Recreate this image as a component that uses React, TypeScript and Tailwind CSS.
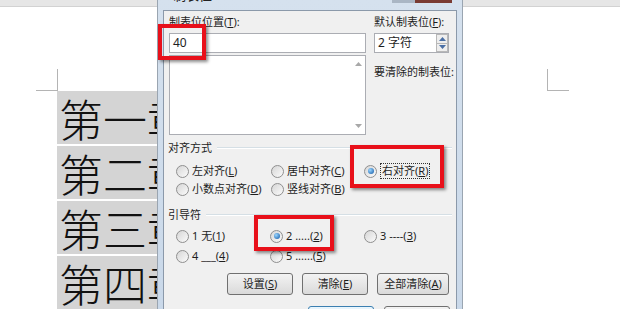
import React from "react";

const Radio = ({ checked }: { checked?: boolean }) => (
  <span className="flex h-[13px] w-[13px] shrink-0 items-center justify-center rounded-full border border-[#8f8f8f] bg-linear-to-br from-[#d6d6d6] to-[#fbfbfb]">
    {checked && (
      <span className="h-[6px] w-[6px] rounded-full bg-[radial-gradient(circle_at_35%_35%,#9ad6ff,#0e55a3)]" />
    )}
  </span>
);

const Option = ({
  checked,
  focus,
  children,
}: {
  checked?: boolean;
  focus?: boolean;
  children: React.ReactNode;
}) => (
  <div className="flex h-[14px] items-center gap-[3px]">
    <Radio checked={checked} />
    <span
      className={
        focus
          ? "border border-dotted border-[#333] px-[1px] leading-[14px]"
          : "leading-[14px]"
      }
    >
      {children}
    </span>
  </div>
);

const GroupTitle = ({ label }: { label: string }) => (
  <div className="flex h-[14px] items-center gap-[5px] pr-[4px]">
    <span className="leading-[14px]">{label}</span>
    <div className="h-[2px] flex-1 border-t border-b border-t-[#d5dfe5] border-b-white" />
  </div>
);

const Btn = ({ w, children }: { w: string; children: React.ReactNode }) => (
  <button
    className={`${w} flex h-[22px] items-center justify-center rounded-[3px] border border-[#707070] bg-linear-to-b from-[#f3f3f3] to-[#dadada] text-[11px] text-[#1e1e1e]`}
  >
    {children}
  </button>
);

const Arrow = ({ up, color }: { up?: boolean; color: string }) => (
  <svg width="7" height="4" viewBox="0 0 7 4">
    <path d={up ? "M0 4 L3.5 0 L7 4 Z" : "M0 0 L3.5 4 L7 0 Z"} fill={color} />
  </svg>
);

const rows = ["第一章", "第二章", "第三章", "第四章"];

export default function App() {
  return (
    <div className="relative h-[309px] w-[620px] overflow-hidden bg-white">
      {/* Word page behind the dialog */}
      <div className="h-[7px] border-b border-[#d2d2d2] bg-[#e6e6e6]" />
      <div className="mt-[62px] flex justify-between pl-[36px] pr-[51px]">
        <div className="h-[22px] w-[22px] border-r border-b border-[#b4b4b4]" />
        <div className="h-[22px] w-[22px] border-l border-b border-[#b4b4b4]" />
      </div>
      <div className="ml-[57px] flex w-[100px] flex-col gap-[2px]">
        {rows.map((r) => (
          <div
            key={r}
            className="flex h-[53px] items-center overflow-hidden whitespace-nowrap bg-[#d4d4d4] pl-[2px] text-[44px] font-light leading-none text-[#111] [font-family:'Noto_Sans_CJK_SC',sans-serif]"
          >
            {r}
          </div>
        ))}
      </div>

      {/* Tab stops dialog */}
      <div className="absolute left-[157px] top-0 flex h-[330px] w-[306px] flex-col border-l border-r border-[#9aa5b1] bg-linear-to-b from-[#d5e1ee] to-[#c9d8e9] px-[5px] text-[11px] text-[#1e1e1e] [font-family:'Noto_Sans','Noto_Sans_CJK_SC',sans-serif]">
        <div className="relative flex h-[10px] justify-end overflow-hidden pr-[5px]">
          <span className="absolute left-[10px] top-[-14px] text-[13px] text-[#222]">制表位</span>
          <div className="h-[3px] w-[23px] bg-[#aab6c4]" />
          <div className="h-[3px] w-[37px] bg-[#7a3b33]" />
        </div>

        <div className="flex flex-1 flex-col border border-[#8b99aa] bg-[#f0f0f0] pt-[4px]">
          <div className="flex gap-[8px] pl-[5px]">
            <div className="flex w-[197px] flex-col">
              <div className="h-[14px] leading-[14px]">
                制表位位置(<u>T</u>):
              </div>
              <div className="mt-[4px] flex h-[20px] items-center border border-[#abadb3] bg-white pl-[3px] text-[12px]">
                40
              </div>
              <div className="mt-[2px] flex h-[80px] justify-end border border-[#abadb3] bg-white">
                <div className="flex w-[14px] flex-col items-center justify-between py-[6px]">
                  <Arrow up color="#a8a8a8" />
                  <Arrow color="#a8a8a8" />
                </div>
              </div>
            </div>
            <div className="flex w-[75px] flex-col">
              <div className="h-[14px] whitespace-nowrap leading-[14px]">
                默认制表位(<u>F</u>):
              </div>
              <div className="mt-[4px] flex h-[20px] border border-[#abadb3] bg-white">
                <div className="flex flex-1 items-center pl-[3px] text-[12px]">2 字符</div>
                <div className="flex w-[12px] flex-col">
                  <div className="flex flex-1 items-center justify-center border border-[#b8b8b8] bg-[#eeeeee]">
                    <Arrow up color="#4a6fa5" />
                  </div>
                  <div className="flex flex-1 items-center justify-center border border-t-0 border-[#b8b8b8] bg-[#eeeeee]">
                    <Arrow color="#4a6fa5" />
                  </div>
                </div>
              </div>
              <div className="mt-[12px] h-[14px] whitespace-nowrap leading-[14px]">
                要清除的制表位:
              </div>
            </div>
          </div>

          <div className="mt-[6px] pl-[4px]">
            <GroupTitle label="对齐方式" />
          </div>
          <div className="ml-[12px] mt-[9px] grid grid-cols-[95px_93px_auto] gap-y-[4px]">
            <Option>
              左对齐(<u>L</u>)
            </Option>
            <Option>
              居中对齐(<u>C</u>)
            </Option>
            <Option checked focus>
              右对齐(<u>R</u>)
            </Option>
            <Option>
              小数点对齐(<u>D</u>)
            </Option>
            <Option>
              竖线对齐(<u>B</u>)
            </Option>
          </div>

          <div className="mt-[12px] pl-[4px]">
            <GroupTitle label="引导符" />
          </div>
          <div className="ml-[12px] mt-[7px] grid grid-cols-[94px_94px_auto] gap-y-[6px]">
            <Option>
              1 无(<u>1</u>)
            </Option>
            <Option checked>
              2 .....(<u>2</u>)
            </Option>
            <Option>
              3 ----(<u>3</u>)
            </Option>
            <Option>
              4 ___(<u>4</u>)
            </Option>
            <Option>
              5 ......(<u>5</u>)
            </Option>
          </div>

          <div className="mt-[10px] flex justify-end gap-[9px] pr-[7px]">
            <Btn w="w-[66px]">
              设置(<u>S</u>)
            </Btn>
            <Btn w="w-[66px]">
              清除(<u>E</u>)
            </Btn>
            <Btn w="w-[72px]">
              全部清除(<u>A</u>)
            </Btn>
          </div>
          <div className="mt-[11px] flex justify-end gap-[10px] pr-[6px]">
            <div className="h-[22px] w-[66px] rounded-[3px] border border-[#3c7fb1] bg-linear-to-b from-[#eaf6fd] to-[#bee6fd]" />
            <div className="h-[22px] w-[66px] rounded-[3px] border border-[#707070] bg-linear-to-b from-[#f3f3f3] to-[#dadada]" />
          </div>
        </div>

        {/* red highlight boxes */}
        <div className="absolute left-0 top-[24px] h-[36px] w-[48px] border-[4px] border-[#e8101a] shadow-[2px_2px_3px_rgba(0,0,0,0.45)]" />
        <div className="absolute left-[192px] top-[145px] h-[43px] w-[94px] border-[4px] border-[#e8101a] shadow-[2px_2px_3px_rgba(0,0,0,0.45)]" />
        <div className="absolute left-[96px] top-[215px] h-[36px] w-[80px] border-[4px] border-[#e8101a] shadow-[2px_2px_3px_rgba(0,0,0,0.45)]" />
      </div>
    </div>
  );
}
